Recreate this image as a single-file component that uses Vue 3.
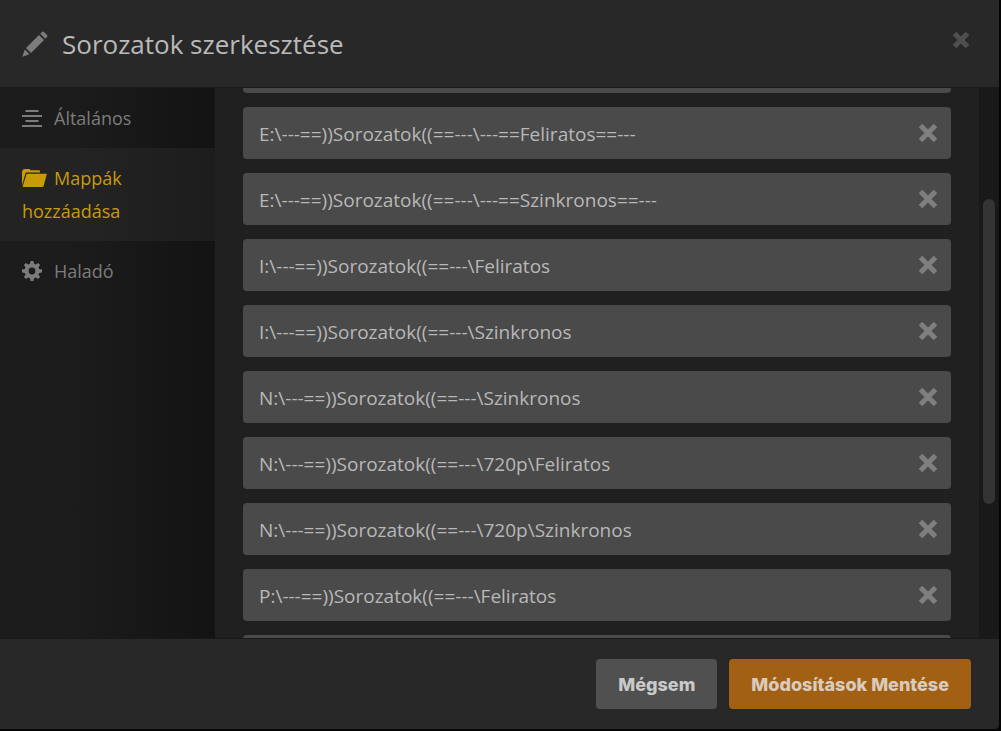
<script setup>
import { ref } from 'vue'

const folders = ref([
  '',
  'E:\\---==))Sorozatok((==---\\---==Feliratos==---',
  'E:\\---==))Sorozatok((==---\\---==Szinkronos==---',
  'I:\\---==))Sorozatok((==---\\Feliratos',
  'I:\\---==))Sorozatok((==---\\Szinkronos',
  'N:\\---==))Sorozatok((==---\\Szinkronos',
  'N:\\---==))Sorozatok((==---\\720p\\Feliratos',
  'N:\\---==))Sorozatok((==---\\720p\\Szinkronos',
  'P:\\---==))Sorozatok((==---\\Feliratos',
  ''
])

const remove = (index) => folders.value.splice(index, 1)
</script>

<template>
  <div class="backdrop">
    <section class="modal" role="dialog" aria-labelledby="modal-title">
      <header class="header">
        <svg class="pencil" viewBox="0 0 26 26" aria-hidden="true">
          <path d="M0.3 25.7 2.8 18.4 7.6 23.2Z" />
          <path d="M4 17 17 4 22 9 9 22Z" />
          <path d="M18.3 2.7 20 1Q21 0 22 1L25 4Q26 5 25 6L23.3 7.7Z" />
        </svg>
        <h1 id="modal-title" class="title">Sorozatok szerkesztése</h1>
        <button class="close" type="button" aria-label="Bezárás">
          <svg viewBox="0 0 20 20" aria-hidden="true"><path d="M3.5 3.5 16.5 16.5M16.5 3.5 3.5 16.5" /></svg>
        </button>
      </header>

      <div class="body">
        <nav class="sidebar">
          <a class="item" href="#general">
            <svg class="icon" viewBox="0 0 20 20" aria-hidden="true">
              <path d="M3.5 2h13v2h-13zM0 7h20v2H0zM3.5 12h13v2h-13zM0 17h20v2H0z" />
            </svg>
            <span>Általános</span>
          </a>
          <a class="item active" href="#folders" aria-current="page">
            <svg class="icon folder" viewBox="0 0 25 20" aria-hidden="true">
              <path d="M0 17.5V3L1.2 2V1.6Q1.3 1 2 1H7.2Q8 1 8.2 1.7L8.4 2.2H17Q18 2.2 18 3.2V4.4H4.6Q3.8 4.4 3.5 5.3Z" />
              <path d="M5.4 5.8H24Q25 5.8 24.7 6.8L21.6 18Q21.3 19 20.3 19H1.3Q0.5 19 0.8 18L4.3 6.8Q4.6 5.8 5.4 5.8Z" />
            </svg>
            <span>Mappák hozzáadása</span>
          </a>
          <a class="item" href="#advanced">
            <svg class="icon" viewBox="0 0 20 20" aria-hidden="true">
              <path fill-rule="evenodd" d="M8.5 0h3l.5 2.8 1.8.7L16.1 1.9l2 2-1.6 2.3.7 1.8 2.8.5v3l-2.8.5-.7 1.8 1.6 2.3-2 2-2.3-1.6-1.8.7-.5 2.8h-3L8 17.2l-1.8-.7-2.3 1.6-2-2 1.6-2.3L2.8 12 0 11.5v-3L2.8 8l.7-1.8L1.9 3.9l2-2 2.3 1.6L8 2.8ZM10 6.6a3.4 3.4 0 1 0 0 6.8a3.4 3.4 0 0 0 0-6.8Z" />
            </svg>
            <span>Haladó</span>
          </a>
        </nav>

        <main class="content">
          <ul class="folders">
            <li v-for="(path, i) in folders" :key="i" class="row">
              <span class="path">{{ path }}</span>
              <button class="remove" type="button" aria-label="Eltávolítás" @click="remove(i)">
                <svg viewBox="0 0 20 20" aria-hidden="true"><path d="M2.5 2.5 17.5 17.5M17.5 2.5 2.5 17.5" /></svg>
              </button>
            </li>
          </ul>
        </main>

        <div class="track"><div class="thumb"></div></div>
      </div>

      <footer class="footer">
        <button class="btn" type="button">Mégsem</button>
        <button class="btn primary" type="button">Módosítások Mentése</button>
      </footer>
    </section>
  </div>
</template>

<style>
body {
  margin: 0;
  background: #050505;
}
</style>

<style scoped>
.backdrop {
  box-sizing: border-box;
  height: 100vh;
  padding: 0 2px 2px 0;
  background: #050505;
  font-family: "Open Sans", "Noto Sans", sans-serif;
}
.modal {
  display: flex;
  flex-direction: column;
  height: 100%;
  background: #282828;
  border-radius: 0 0 4px 0;
  overflow: hidden;
}
.header {
  display: flex;
  align-items: center;
  box-sizing: border-box;
  height: 88px;
  flex: none;
  padding: 0 28px 0 22px;
  border-bottom: 1px solid #191919;
}
.pencil {
  width: 26px;
  height: 26px;
  fill: #7c7c7c;
}
.title {
  flex: 1;
  margin: 0 0 0 14px;
  color: #b9b9b9;
  font-size: 26px;
  font-weight: 400;
  line-height: 36px;
}
button {
  border: 0;
  cursor: pointer;
}
.close,
.remove {
  display: flex;
  padding: 0;
  background: none;
}
.close {
  margin-bottom: 8px;
}
.close svg,
.remove svg {
  width: 20px;
  height: 20px;
  fill: none;
  stroke: #4f4f4f;
  stroke-width: 5;
}
.remove svg {
  stroke: #7f7f7f;
}
.body {
  display: flex;
  flex: 1;
  min-height: 0;
  background: #202020;
}
.sidebar {
  flex: none;
  width: 215px;
  background: linear-gradient(90deg, #1c1c1c 30%, #131313);
}
.item {
  display: block;
  padding: 14px 22px 13px;
  color: #7c7c7c;
  font-size: 18px;
  line-height: 33px;
  text-decoration: none;
}
.item.active {
  color: #c79a08;
  background: linear-gradient(90deg, #232323 40%, #1d1d1d);
}
.icon {
  width: 20px;
  height: 20px;
  margin-right: 12px;
  vertical-align: -3px;
  fill: currentColor;
}
.icon.folder {
  width: 25px;
  margin-right: 7px;
}
.content {
  flex: 1;
  min-width: 0;
  overflow: hidden;
}
.folders {
  display: flex;
  flex-direction: column;
  gap: 14px;
  margin: -47px 28px 0;
  padding: 0;
  list-style: none;
}
.row {
  display: flex;
  align-items: center;
  justify-content: space-between;
  box-sizing: border-box;
  height: 52px;
  padding: 0 13px 0 16px;
  border-radius: 4px;
  background: #4a4a4a;
}
.path {
  padding-top: 2px;
  color: #b8b8b8;
  font-size: 19px;
  line-height: 24px;
}
.track {
  display: grid;
  grid-template-rows: 111fr 305fr 134fr;
  flex: none;
  width: 20px;
  background: #191919;
}
.thumb {
  grid-row: 2;
  margin: 0 4px;
  border-radius: 6px;
  background: #343434;
}
.footer {
  display: flex;
  align-items: center;
  justify-content: flex-end;
  gap: 12px;
  box-sizing: border-box;
  flex: none;
  height: 91px;
  padding: 0 28px;
  border-top: 1px solid #191919;
}
.btn {
  height: 50px;
  padding: 0 22px;
  border-radius: 4px;
  background: #505050;
  color: #c9c9c9;
  font-family: Inter, sans-serif;
  font-size: 18px;
  font-weight: 800;
}
.btn.primary {
  background: #a16014;
  color: #d9cbbd;
}
</style>
